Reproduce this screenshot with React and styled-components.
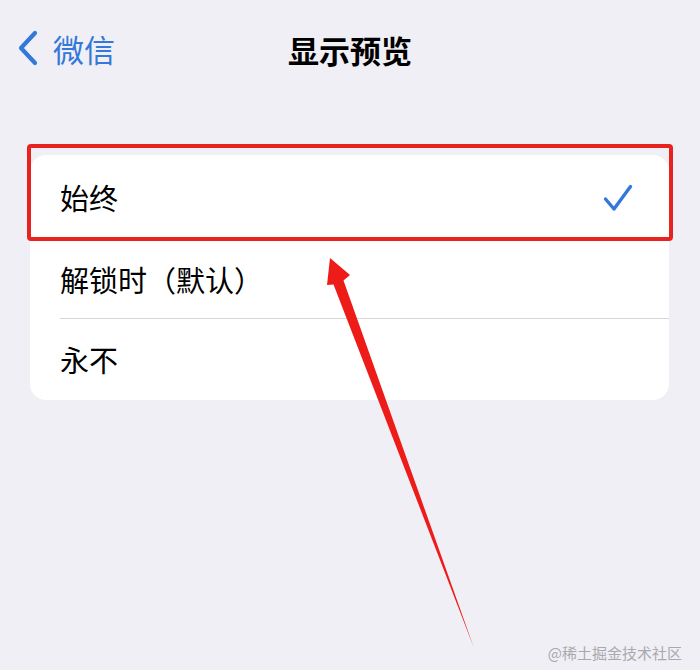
import React from 'react';
import styled, { createGlobalStyle } from 'styled-components';

const GlobalStyle = createGlobalStyle`
  html, body {
    margin: 0;
    padding: 0;
    background: #f0eff5;
  }
  body {
    font-family: "Noto Sans CJK SC", "Noto Sans", sans-serif;
  }
`;

const Page = styled.div`
  position: relative;
  width: 700px;
  height: 670px;
  overflow: hidden;
  background: #f0eff5;
`;

const NavBar = styled.div`
  display: grid;
  grid-template-columns: 1fr auto 1fr;
  align-items: center;
  height: 98px;
  padding: 0 0 0 17px;
`;

const BackLink = styled.div`
  display: flex;
  align-items: center;
  gap: 14px;
  color: #3478d9;
  font-size: 31px;
  line-height: 1;
  margin-top: -2px;
`;

const Title = styled.div`
  font-size: 31px;
  font-weight: 700;
  color: #000;
  line-height: 1;
  margin-left: -17px;
`;

const Card = styled.div`
  margin: 57px 31px 0 30px;
  background: #fff;
  border-radius: 16px;
`;

const Row = styled.div`
  position: relative;
  display: flex;
  align-items: center;
  justify-content: space-between;
  height: ${p => p.h}px;
  padding: 0 36px 0 30px;
  font-size: 29px;
  color: #000;
  ${p => p.divider && `
    &::before {
      content: "";
      position: absolute;
      left: 30px;
      right: 0;
      top: 0;
      height: 1px;
      background: #d6d6db;
    }
  `}
  ${p => p.marked && `
    &::after {
      content: "";
      position: absolute;
      left: -3px;
      right: -4px;
      top: -11px;
      bottom: -1px;
      border: 4px solid #e8231f;
      border-radius: 4px;
    }
  `}
`;

const RowLabel = styled.span`
  line-height: 1;
  margin-top: ${p => p.shift || 0}px;
`;

const Arrow = styled.svg`
  position: absolute;
  left: 0;
  top: 0;
  pointer-events: none;
`;

const Watermark = styled.div`
  position: absolute;
  right: 18px;
  bottom: 10px;
  font-size: 15px;
  color: #a9a9ad;
  line-height: 1;
`;

const Chevron = () => (
  <svg width="22" height="36" viewBox="0 0 22 36">
    <path d="M18 3 L4 18 L18 33" fill="none" stroke="#3478d9" strokeWidth="4.2" strokeLinecap="round" strokeLinejoin="round" />
  </svg>
);

const Check = () => (
  <svg width="30" height="28" viewBox="0 0 30 28">
    <path d="M2.5 15 L11 25 L27.5 2.5" fill="none" stroke="#3478d9" strokeWidth="3.4" strokeLinecap="round" strokeLinejoin="round" />
  </svg>
);

const options = [
  { label: '始终', h: 85, checked: true, marked: true },
  { label: '解锁时（默认）', h: 78, divider: false },
  { label: '永不', h: 82, divider: true },
];

const App = () => {
  return (
    <Page>
      <GlobalStyle />
      <NavBar>
        <BackLink>
          <Chevron />
          <span>微信</span>
        </BackLink>
        <Title>显示预览</Title>
        <div />
      </NavBar>
      <Card>
        {options.map(o => (
          <Row key={o.label} h={o.h} divider={o.divider} marked={o.marked}>
            <RowLabel>{o.label}</RowLabel>
            {o.checked && <Check />}
          </Row>
        ))}
      </Card>
      <Arrow width="700" height="670" viewBox="0 0 700 670">
        <polygon
          points="330,258 350,275 343.5,280.5 474,648 333.5,284.5 327,285"
          fill="#ee1c19"
        />
      </Arrow>
      <Watermark>@稀土掘金技术社区</Watermark>
    </Page>
  );
};

export default App;
